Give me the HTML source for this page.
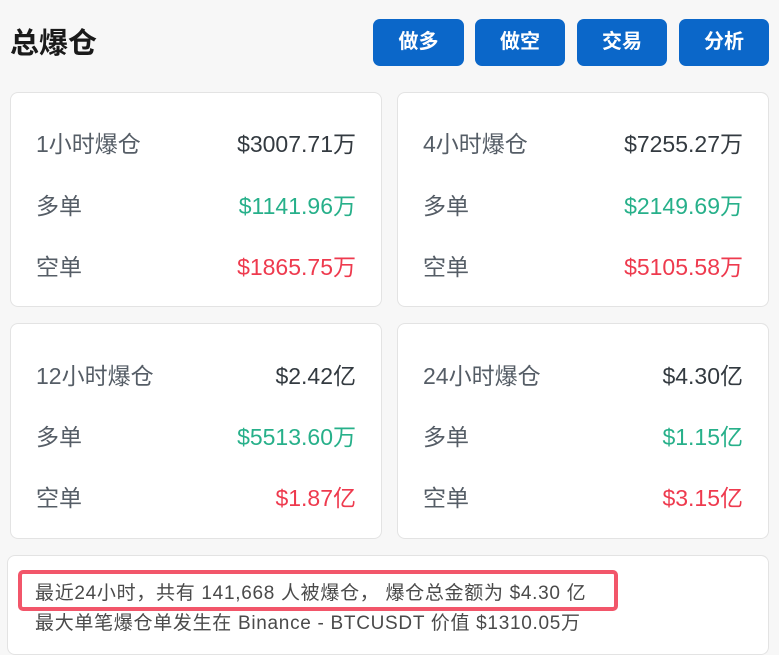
<!DOCTYPE html>
<html><head><meta charset="utf-8"><style>
*{margin:0;padding:0;box-sizing:border-box}
body{width:779px;height:642px;background:#f7f7f7;font-family:"Liberation Sans","Noto Sans CJK SC",sans-serif;position:relative;overflow:hidden}
h1{position:absolute;left:10px;top:24px;font-size:29px;font-weight:bold;color:#1a1a1a;line-height:40px}
.btn{position:absolute;top:19px;height:47px;width:91px;background:#0b67c9;color:#fff;border-radius:7px;font-size:20px;font-weight:bold;text-align:center;line-height:47px}
.card{position:absolute;background:#fff;border:1px solid #e3e3e3;border-radius:8px}
.row{position:absolute;left:25px;right:25px;height:30px;font-size:23px;line-height:30px;color:#555d66}
.row span{position:absolute;right:0;top:0;color:#333a40}
.row span.g{color:#27b08a}.row span.r{color:#ee3a4e}
.t{position:absolute;left:25px;font-size:19px;letter-spacing:0.7px;color:#4a4a4a;line-height:24px;white-space:nowrap}
</style></head><body>
<h1>总爆仓</h1>
<div class="btn" style="left:373px">做多</div>
<div class="btn" style="left:475px;width:90px">做空</div>
<div class="btn" style="left:577px;width:90px">交易</div>
<div class="btn" style="left:679px;width:90px">分析</div>

<div class="card" style="left:10px;top:92px;width:372px;height:215px">
<div class="row" style="top:36px">1小时爆仓<span>$3007.71万</span></div>
<div class="row" style="top:98px">多单<span class="g">$1141.96万</span></div>
<div class="row" style="top:159px">空单<span class="r">$1865.75万</span></div>
</div>
<div class="card" style="left:397px;top:92px;width:372px;height:215px">
<div class="row" style="top:36px">4小时爆仓<span>$7255.27万</span></div>
<div class="row" style="top:98px">多单<span class="g">$2149.69万</span></div>
<div class="row" style="top:159px">空单<span class="r">$5105.58万</span></div>
</div>
<div class="card" style="left:10px;top:323px;width:372px;height:216px">
<div class="row" style="top:37px">12小时爆仓<span>$2.42亿</span></div>
<div class="row" style="top:98px">多单<span class="g">$5513.60万</span></div>
<div class="row" style="top:159px">空单<span class="r">$1.87亿</span></div>
</div>
<div class="card" style="left:397px;top:323px;width:372px;height:216px">
<div class="row" style="top:37px">24小时爆仓<span>$4.30亿</span></div>
<div class="row" style="top:98px">多单<span class="g">$1.15亿</span></div>
<div class="row" style="top:159px">空单<span class="r">$3.15亿</span></div>
</div>
<div class="card" style="left:7px;top:555px;width:762px;height:100px"></div>
<div style="position:absolute;left:18px;top:570px;width:600px;height:41px;border:4px solid #f2566a;border-radius:5px"></div>
<div class="t" style="left:35px;top:582px">最近24小时，共有 141,668 人被爆仓， 爆仓总金额为 $4.30 亿</div>
<div class="t" style="left:35px;top:612px">最大单笔爆仓单发生在 Binance - BTCUSDT 价值 $1310.05万</div>
</body></html>
